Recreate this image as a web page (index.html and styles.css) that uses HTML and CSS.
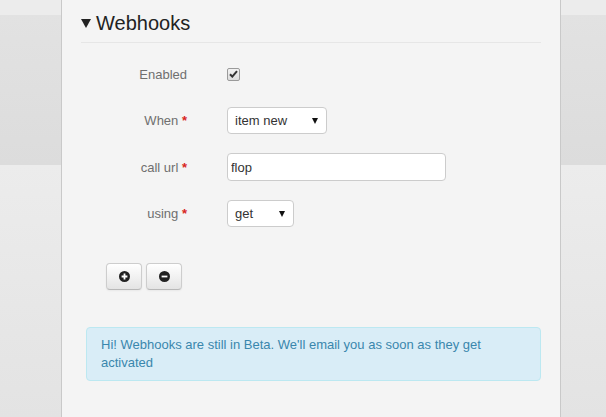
FILE: index.html
```html
<!DOCTYPE html>
<html>
<head>
<meta charset="utf-8">
<link rel="stylesheet" href="styles.css">
</head>
<body>
<div class="panel">
  <h2 class="title"><svg class="caret" width="10" height="9" viewBox="0 0 10 9"><polygon points="0,0 10,0 5,9" fill="#222"/></svg>Webhooks</h2>
  <form class="form">
    <div class="row">
      <label class="label">Enabled</label>
      <div class="control">
        <span class="check"><svg width="9" height="8" viewBox="0 0 9 8"><path d="M1 4.2 L3.3 6.6 L8 1.2" fill="none" stroke="#333" stroke-width="2"/></svg></span>
      </div>
    </div>
    <div class="row">
      <label class="label">When <span class="req">*</span></label>
      <div class="control">
        <div class="select select-when"><span>item new</span><i class="arrow"></i></div>
      </div>
    </div>
    <div class="row">
      <label class="label">call url <span class="req">*</span></label>
      <div class="control">
        <input class="input" type="text" value="flop">
      </div>
    </div>
    <div class="row">
      <label class="label">using <span class="req">*</span></label>
      <div class="control">
        <div class="select select-using"><span>get</span><i class="arrow"></i></div>
      </div>
    </div>
    <div class="buttons">
      <button type="button" class="btn"><svg width="11" height="11" viewBox="0 0 11 11"><circle cx="5.5" cy="5.5" r="5.5" fill="#222"/><path d="M5.5 2.6 V8.4 M2.6 5.5 H8.4" stroke="#fff" stroke-width="1.8"/></svg></button>
      <button type="button" class="btn"><svg width="11" height="11" viewBox="0 0 11 11"><circle cx="5.5" cy="5.5" r="5.5" fill="#222"/><path d="M2.6 5.5 H8.4" stroke="#fff" stroke-width="1.8"/></svg></button>
    </div>
    <div class="alert">Hi! Webhooks are still in Beta. We'll email you as soon as they get activated</div>
  </form>
</div>
</body>
</html>
```
FILE: styles.css
```css
html, body {
  margin: 0;
  height: 100%;
}
body {
  font-family: "Liberation Sans", Arial, sans-serif;
  font-size: 13px;
  color: #333;
  background: linear-gradient(to bottom,
    #ececec 0, #ececec 15px,
    #e2e2e2 15px, #dcdcdc 165px,
    #ececec 165px, #e3e3e3 100%);
  overflow: hidden;
}
.panel {
  box-sizing: border-box;
  width: 500px;
  margin-left: 61px;
  height: 100%;
  background: #f4f4f4;
  border-left: 1px solid #c9c9c9;
  border-right: 1px solid #c9c9c9;
  padding: 0 19px;
}
.title {
  margin: 0;
  padding: 8px 0 4px;
  font-size: 20px;
  font-weight: normal;
  line-height: 30px;
  color: #222;
  border-bottom: 1px solid #e6e6e6;
  display: flex;
  align-items: center;
}
.caret {
  margin: 1px 5px 0 0;
}
.form {
  margin: 17px 0 0;
}
.row {
  display: flex;
  align-items: center;
  height: 28px;
  margin-bottom: 18.5px;
}
.label {
  width: 106px;
  text-align: right;
  color: #6f6f6f;
  margin-right: 40px;
}
.req {
  color: #d8261c;
  font-weight: bold;
}
.control {
  display: flex;
  align-items: center;
}
.check {
  box-sizing: border-box;
  width: 13px;
  height: 13px;
  border: 1px solid #9a9a9a;
  border-radius: 2px;
  background: linear-gradient(#f2f2f2, #dcdcdc);
  display: flex;
  align-items: center;
  justify-content: center;
}
.select {
  position: relative;
  box-sizing: border-box;
  height: 27px;
  border: 1px solid #ccc;
  border-radius: 4px;
  background: #fff;
  padding-left: 7px;
  display: flex;
  align-items: center;
  color: #333;
}
.select-when { width: 100px; }
.select-using { width: 67px; }
.arrow {
  position: absolute;
  right: 8px;
  top: 10px;
  width: 0;
  height: 0;
  border-left: 3px solid transparent;
  border-right: 3px solid transparent;
  border-top: 6px solid #111;
}
.input {
  box-sizing: border-box;
  width: 219px;
  height: 28px;
  border: 1px solid #ccc;
  border-radius: 4px;
  background: #fff;
  padding: 0 3px;
  font-family: inherit;
  font-size: 13px;
  color: #333;
  outline: none;
}
.buttons {
  display: flex;
  gap: 4px;
  margin: 35px 0 0 25px;
}
.btn {
  box-sizing: border-box;
  width: 36px;
  height: 27px;
  border: 1px solid #cdcdcd;
  border-bottom-color: #b8b8b8;
  border-radius: 4px;
  background: linear-gradient(#ffffff, #e4e4e4);
  box-shadow: inset 0 1px 0 rgba(255,255,255,.2), 0 1px 2px rgba(0,0,0,.05);
  padding: 0;
  display: flex;
  align-items: center;
  justify-content: center;
}
.alert {
  box-sizing: border-box;
  width: 455px;
  margin: 37px 0 0 5px;
  padding: 8px 35px 8px 14px;
  line-height: 18px;
  background: #d9edf7;
  border: 1px solid #bce8f1;
  border-radius: 4px;
  color: #3a87ad;
}
```
